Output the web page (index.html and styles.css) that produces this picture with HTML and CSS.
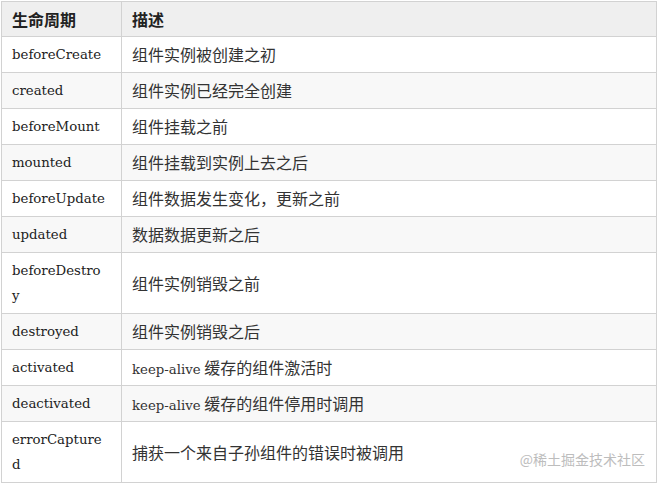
FILE: index.html
```html
<!DOCTYPE html>
<html>
<head>
<meta charset="utf-8">
<link rel="stylesheet" href="styles.css">
</head>
<body>
<div class="wrap">
<table class="lc">
  <colgroup><col class="c1"><col class="c2"></colgroup>
  <thead>
    <tr><th>生命周期</th><th>描述</th></tr>
  </thead>
  <tbody>
    <tr><td class="k">beforeCreate</td><td>组件实例被创建之初</td></tr>
    <tr><td class="k">created</td><td>组件实例已经完全创建</td></tr>
    <tr><td class="k">beforeMount</td><td>组件挂载之前</td></tr>
    <tr><td class="k">mounted</td><td>组件挂载到实例上去之后</td></tr>
    <tr><td class="k">beforeUpdate</td><td>组件数据发生变化，更新之前</td></tr>
    <tr><td class="k">updated</td><td>数据数据更新之后</td></tr>
    <tr><td class="k">beforeDestroy</td><td>组件实例销毁之前</td></tr>
    <tr><td class="k">destroyed</td><td>组件实例销毁之后</td></tr>
    <tr><td class="k">activated</td><td><span class="lat">keep-alive</span> 缓存的组件激活时</td></tr>
    <tr><td class="k">deactivated</td><td><span class="lat">keep-alive</span> 缓存的组件停用时调用</td></tr>
    <tr><td class="k">errorCaptured</td><td>捕获一个来自子孙组件的错误时被调用</td></tr>
  </tbody>
</table>
<div class="wm">@稀土掘金技术社区</div>
</div>
</body>
</html>
```
FILE: styles.css
```css
html, body { margin: 0; padding: 0; background: #fff; }
.wrap { position: relative; width: 660px; height: 486px; padding: 1px 0 0 1px; box-sizing: border-box; }
.lc {
  border-collapse: collapse;
  table-layout: fixed;
  width: 656px;
  font-family: "DejaVu Serif", "Noto Sans CJK SC", serif;
  color: #333;
}
.c1 { width: 120px; }
.lc th, .lc td {
  border: 1px solid #d2d2d2;
  padding: 5px 10px;
  text-align: left;
  vertical-align: middle;
  line-height: 25px;
}
.lc th {
  background: #efefef;
  font-family: "Noto Sans CJK SC", sans-serif;
  font-weight: bold;
  font-size: 16px;
  height: 24px;
  padding-top: 5px;
  padding-bottom: 5px;
  line-height: 24px;
  color: #222;
}
.lc td {
  font-family: "Noto Sans CJK SC", sans-serif;
  font-size: 16px;
  height: 25px;
}
.lc td.k {
  font-family: "DejaVu Serif", serif;
  font-size: 13.3px;
  word-break: break-all;
  padding-right: 16px;
  color: #222;
}
.lat { font-family: "DejaVu Serif", serif; font-size: 13.3px; line-height: 14px; }
.lc tbody tr:nth-child(even) td { background: #f8f8f8; }
.wm {
  position: absolute;
  right: 15px;
  bottom: 17px;
  font-family: "Noto Sans CJK SC", sans-serif;
  font-size: 14px;
  color: #bdbdbd;
  line-height: 20px;
}
```
